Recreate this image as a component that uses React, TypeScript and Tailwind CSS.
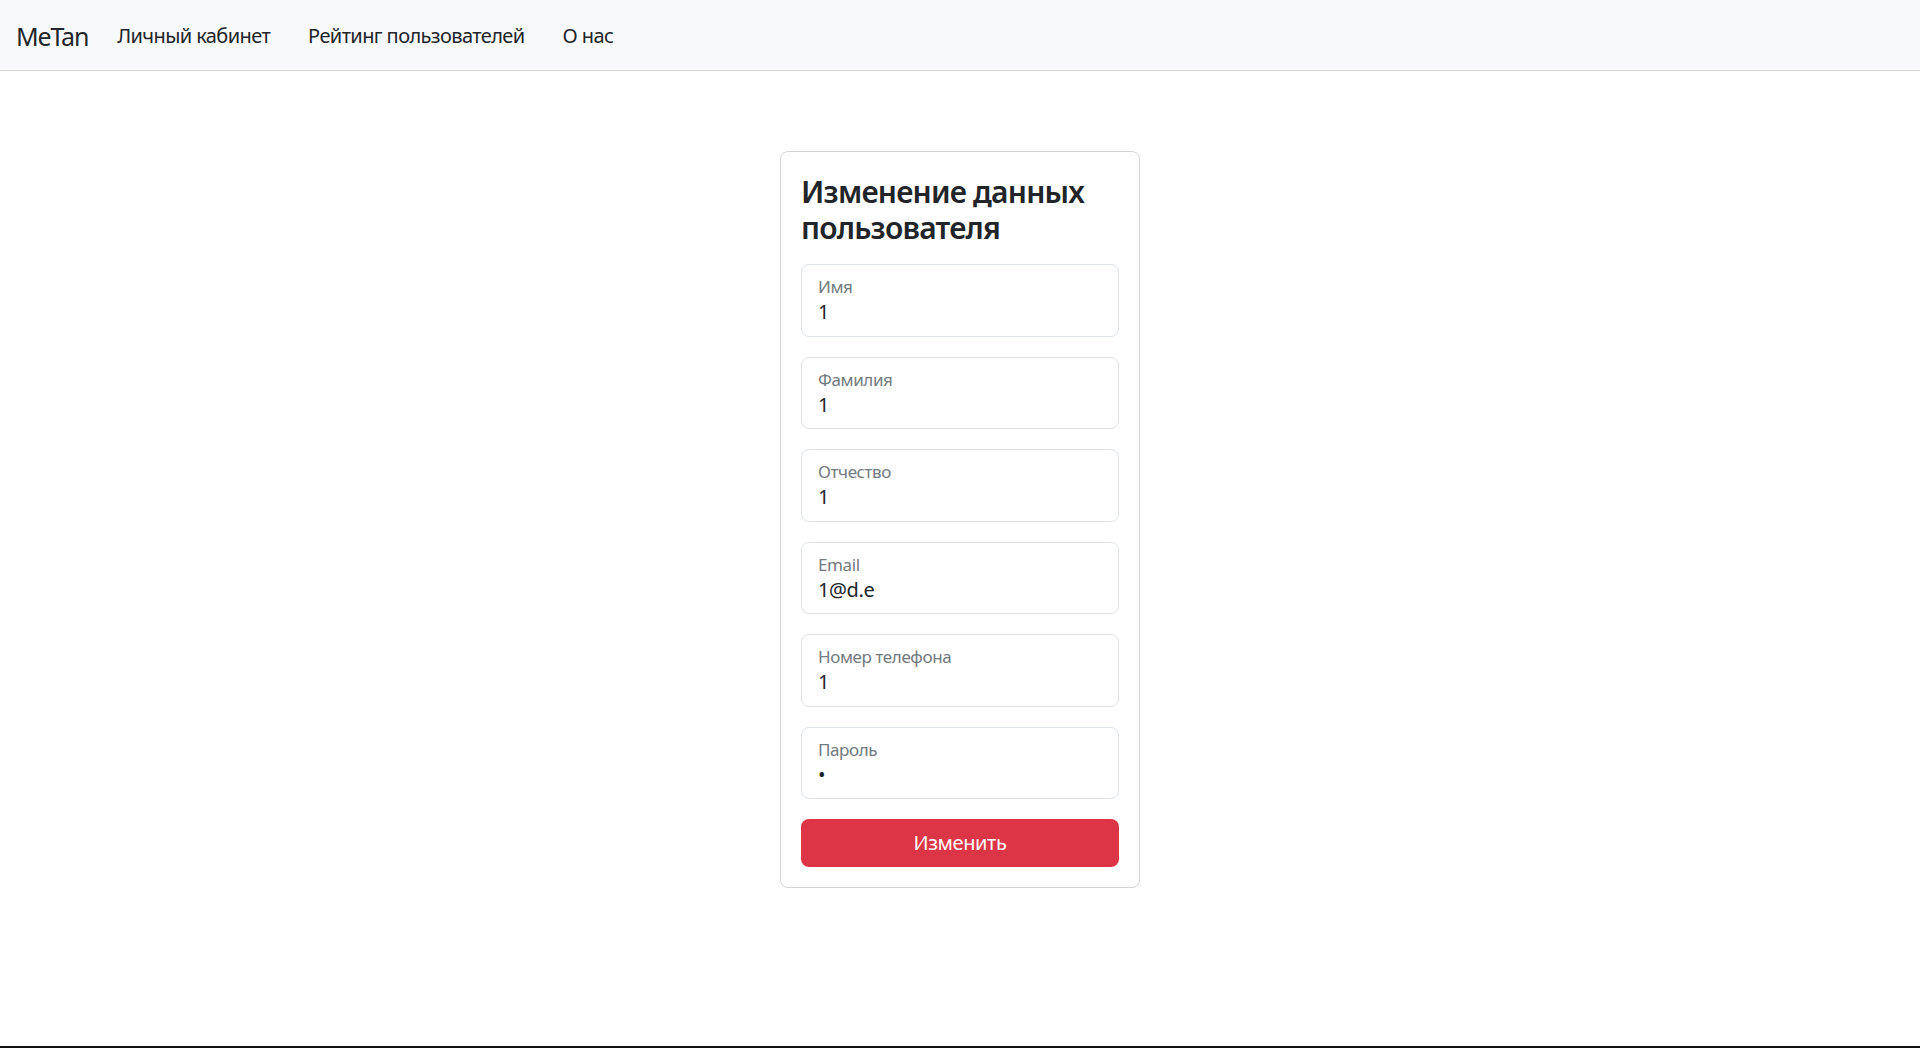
import React from "react";

const fields = [
  { label: "Имя", value: "1" },
  { label: "Фамилия", value: "1" },
  { label: "Отчество", value: "1" },
  { label: "Email", value: "1@d.e" },
  { label: "Номер телефона", value: "1" },
  { label: "Пароль", value: "•" },
];

export default function App() {
  return (
    <div className="h-[1048px] flex flex-col bg-white text-[#212529] font-['Noto_Sans',sans-serif] border-b-2 border-[#111]">
      {/* Navbar */}
      <nav className="h-[71px] shrink-0 bg-[#f8f9fa] border-b border-[#d6d6d6] flex items-center pl-[16px] pt-[2px]">
        <span className="text-[25px] leading-[38px] mr-[10px] tracking-[-1.2px]">MeTan</span>
        <a className="text-[20px] leading-[30px] px-[19px] tracking-[-0.6px]">Личный кабинет</a>
        <a className="text-[20px] leading-[30px] px-[19px] tracking-[-0.6px]">Рейтинг пользователей</a>
        <a className="text-[20px] leading-[30px] px-[19px] tracking-[-0.6px]">О нас</a>
      </nav>

      {/* Card */}
      <div className="mt-[80px] mx-auto w-[360px] border border-[#d3d3d4] rounded-[8px] p-[20px] flex flex-col">
        <h4 className="text-[30px] leading-[36px] font-semibold tracking-[-0.8px] mt-[2px] mb-[18px]">
          Изменение данных пользователя
        </h4>

        {fields.map((f) => (
          <div
            key={f.label}
            className="h-[72.5px] mb-[20px] border border-[#dee2e6] rounded-[8px] pl-[16px] pt-[12px] flex flex-col"
          >
            <span className="text-[17px] leading-[20px] text-[#737a80] tracking-[-0.4px]">{f.label}</span>
            <span className="text-[20px] leading-[30px] text-[#212529] tracking-[-0.4px]">{f.value}</span>
          </div>
        ))}

        <button className="h-[47.5px] w-full bg-[#dc3545] text-white text-[20px] rounded-[8px] tracking-[-0.4px]">
          Изменить
        </button>
      </div>
    </div>
  );
}
